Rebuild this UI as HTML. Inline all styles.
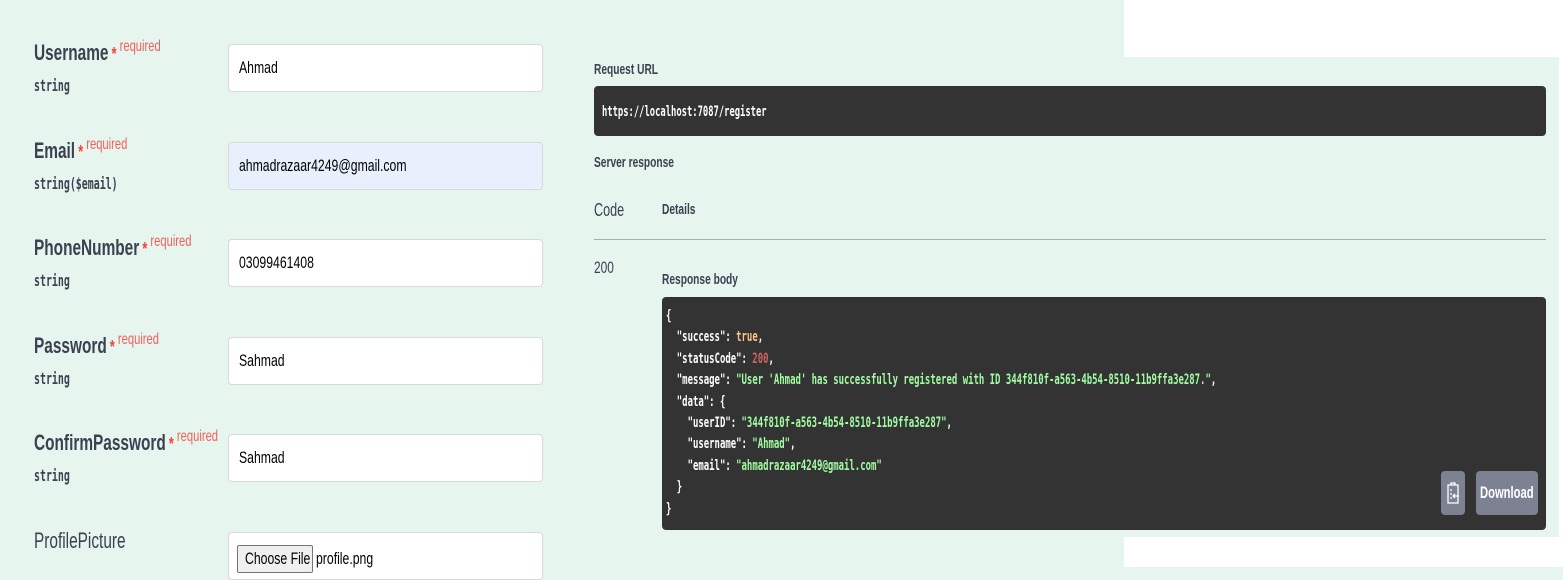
<!DOCTYPE html>
<html><head><meta charset="utf-8"><style>
*{margin:0;padding:0;box-sizing:border-box}
body{width:1563px;height:567px;overflow:hidden;background:#e6f5ee;position:relative;font-family:"Liberation Sans",sans-serif}
.a{position:absolute;white-space:nowrap}
.sq{transform:scaleX(.7);transform-origin:0 0}
.lbl{font-size:22px;font-weight:bold;color:#3b4151}
.req{font-size:16px;color:#f93e3e}
.req b{font-size:18px}
.req span{color:#f25f5c;font-weight:normal}
.typ{font-family:"DejaVu Sans Mono","Liberation Mono",monospace;font-size:16px;font-weight:bold;color:#3b4151;transform:scaleX(.62);transform-origin:0 0}
.inp{position:absolute;left:228px;width:315px;height:48px;background:#fff;border:1px solid #d9d9d9;border-radius:4px;font-size:17px;color:#000;padding:13px 10px}
.inp span{display:inline-block;transform:scaleX(.72);transform-origin:0 0}
.dark{position:absolute;background:#333;border-radius:4px}
.sm{font-size:15px;color:#3b4151;font-weight:bold;transform:scaleX(.68);transform-origin:0 0}
pre{font-family:"DejaVu Sans Mono","Liberation Mono",monospace;font-size:14px;font-weight:bold;color:#fff;line-height:21.4px;transform:scaleX(.64);transform-origin:0 0}
.s{color:#a2fca2}.n{color:#d36363}.t{color:#fcc28c}
</style></head><body>
<div class="a" style="left:1124px;top:0;width:439px;height:57px;background:#fff"></div>
<div class="a" style="left:1124px;top:537px;width:439px;height:30px;background:#fff"></div>
<div class="a" style="left:1559px;top:57px;width:4px;height:480px;background:#fff"></div>

<div class="a sq" style="left:34px;top:40px"><span class="lbl">Username</span> <span class="req"><b>*</b> <span style="position:relative;top:-9px">required</span></span></div>
<div class="a typ" style="left:34px;top:76px">string</div>
<div class="inp" style="top:44px"><span>Ahmad</span></div>

<div class="a sq" style="left:34px;top:138px"><span class="lbl">Email</span> <span class="req"><b>*</b> <span style="position:relative;top:-9px">required</span></span></div>
<div class="a typ" style="left:34px;top:174px">string($email)</div>
<div class="inp" style="top:142px;background:#e8f0fe"><span>ahmadrazaar4249@gmail.com</span></div>

<div class="a sq" style="left:34px;top:235px"><span class="lbl">PhoneNumber</span> <span class="req"><b>*</b> <span style="position:relative;top:-9px">required</span></span></div>
<div class="a typ" style="left:34px;top:271px">string</div>
<div class="inp" style="top:239px"><span>03099461408</span></div>

<div class="a sq" style="left:34px;top:333px"><span class="lbl">Password</span> <span class="req"><b>*</b> <span style="position:relative;top:-9px">required</span></span></div>
<div class="a typ" style="left:34px;top:369px">string</div>
<div class="inp" style="top:337px"><span>Sahmad</span></div>

<div class="a sq" style="left:34px;top:430px"><span class="lbl">ConfirmPassword</span> <span class="req"><b>*</b> <span style="position:relative;top:-9px">required</span></span></div>
<div class="a typ" style="left:34px;top:466px">string</div>
<div class="inp" style="top:434px"><span>Sahmad</span></div>

<div class="a sq" style="left:34px;top:528px"><span class="lbl" style="font-weight:normal">ProfilePicture</span></div>
<div class="inp" style="top:532px"></div>
<div class="a" style="left:237px;top:545px;width:76px;height:28px;border:1px solid #767676;background:#efefef;border-radius:2px"></div>
<div class="a" style="left:245px;top:549px;font-size:17px;transform:scaleX(.72);transform-origin:0 0">Choose File</div>
<div class="a" style="left:316px;top:549px;font-size:17px;transform:scaleX(.72);transform-origin:0 0">profile.png</div>

<div class="a sm" style="left:594px;top:61px">Request URL</div>
<div class="dark" style="left:594px;top:86px;width:952px;height:50px"></div>
<div class="a" style="left:602px;top:104px;font-family:'DejaVu Sans Mono',monospace;font-size:14px;font-weight:bold;color:#fff;transform:scaleX(.63);transform-origin:0 0">https://localhost:7087/register</div>
<div class="a sm" style="left:594px;top:154px">Server response</div>
<div class="a" style="left:594px;top:200px;font-size:18px;color:#3b4151;transform:scaleX(.7);transform-origin:0 0">Code</div>
<div class="a sm" style="left:662px;top:201px">Details</div>
<div class="a" style="left:594px;top:239px;width:952px;height:1px;background:#a8b0ae"></div>
<div class="a" style="left:594px;top:258px;font-size:17px;color:#3b4151;transform:scaleX(.7);transform-origin:0 0">200</div>
<div class="a sm" style="left:662px;top:271px">Response body</div>
<div class="dark" style="left:662px;top:297px;width:884px;height:233px"></div>
<div class="a" style="left:666px;top:306px"><pre>{
  "success": <span class="t">true</span>,
  "statusCode": <span class="n">200</span>,
  "message": <span class="s">"User 'Ahmad' has successfully registered with ID 344f810f-a563-4b54-8510-11b9ffa3e287."</span>,
  "data": {
    "userID": <span class="s">"344f810f-a563-4b54-8510-11b9ffa3e287"</span>,
    "username": <span class="s">"Ahmad"</span>,
    "email": <span class="s">"ahmadrazaar4249@gmail.com"</span>
  }
}</pre></div>
<div class="a" style="left:1441px;top:471px;width:24px;height:44px;background:#7d8293;border-radius:4px">
<svg width="24" height="44" viewBox="0 0 24 44"><g fill="none" stroke="#fff" stroke-width="1.3"><path d="M7 14h10v18H7z"/><path d="M10 14v-2h4v2"/><path d="M9 19h2M9 23h2M9 27h2M12 25h6M14 23l-2 2 2 2"/></g></svg></div>
<div class="a" style="left:1476px;top:471px;width:62px;height:44px;background:#7d8293;border-radius:4px"></div>
<div class="a" style="left:1480px;top:483px;color:#fff;font-size:17px;font-weight:bold;transform:scaleX(.66);transform-origin:0 0">Download</div>
</body></html>
